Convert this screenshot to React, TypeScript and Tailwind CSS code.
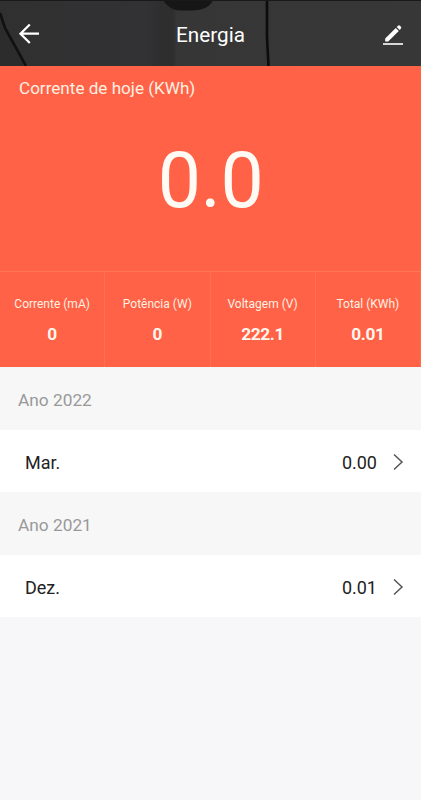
const stats = [
  { label: 'Corrente (mA)', value: '0' },
  { label: 'Potência (W)', value: '0' },
  { label: 'Voltagem (V)', value: '222.1' },
  { label: 'Total (KWh)', value: '0.01' },
];

const years = [
  { title: 'Ano 2022', month: 'Mar.', value: '0.00' },
  { title: 'Ano 2021', month: 'Dez.', value: '0.01' },
];

function Header() {
  return (
    <header className="relative h-[66px] overflow-hidden bg-[#363637]">
      <svg className="absolute inset-0" width="421" height="66" viewBox="0 0 421 66" fill="none">
        <defs>
          <linearGradient id="shade" x1="0" x2="421" y1="0" y2="0" gradientUnits="userSpaceOnUse">
            <stop offset="0" stopColor="#303031" />
            <stop offset="0.350" stopColor="#323234" />
            <stop offset="0.380" stopColor="#2e2e2f" />
            <stop offset="0.410" stopColor="#2e2e2f" />
            <stop offset="0.420" stopColor="#363637" />
            <stop offset="1" stopColor="#373738" />
          </linearGradient>
        </defs>
        <rect width="421" height="66" fill="url(#shade)" />
        <path d="M0 13L5 28L26 66H0Z" fill="#2c2c2d" />
        <path d="M163 0H213Q209 10 192 10.500H180Q169 10 163 0Z" fill="#161617" />
        <path d="M0 13L5 28L26 66" stroke="#111112" strokeWidth="2.600" />
        <path d="M267 0V37L268.500 66" stroke="#0c0c0d" strokeWidth="2.600" />
        <rect width="421" height="1" fill="#19191a" />
      </svg>
      <div className="relative grid h-full grid-cols-[1fr_auto_1fr] items-center pt-[3px] text-white">
        <svg className="mt-[-2px] ml-[18px]" width="22" height="22" viewBox="0 0 22 22" fill="none" stroke="currentColor" strokeWidth="2.300">
          <path d="M11.800 1.500L2.500 10.700L11.800 20M2.500 10.700H21" />
        </svg>
        <h1 className="text-[20.700px] leading-[24px]">Energia</h1>
        <svg className="mr-[17px] justify-self-end" width="22" height="22" viewBox="0 0 22 22">
          <path d="M3.200 17.400V14.600L13.800 4L16.800 7L6.200 17.400Z" fill="currentColor" />
          <path d="M14.700 3.100L16 1.800Q17 .9 18 1.800L18.900 2.700Q19.700 3.600 18.900 4.600L17.700 6Z" fill="currentColor" />
          <path d="M1 20H21" stroke="currentColor" strokeWidth="1.600" />
        </svg>
      </div>
    </header>
  );
}

export default function App() {
  return (
    <main className="flex h-[800px] w-[421px] flex-col overflow-hidden bg-[#f7f7f9] font-[Roboto,sans-serif]">
      <Header />
      <section className="h-[301px] bg-[#ff6246] text-[#fff0e2]">
        <div className="h-[205px] pt-[10px]">
          <h2 className="pl-[19px] text-[17.100px] leading-[24px]">Corrente de hoje (KWh)</h2>
          <p className="mt-[35px] text-center text-[77px] leading-[92px] tracking-[-0.500px] text-[#fffaf4]">0.0</p>
        </div>
        <div className="grid h-[96px] grid-cols-4 border-t border-[#ff7752]">
          {stats.map((s) => (
            <div key={s.label} className="flex flex-col items-center border-r border-[#ff7050] pt-[23px]">
              <span className="text-[12px] leading-[18px] whitespace-nowrap">{s.label}</span>
              <strong className="mt-[11px] text-[17.300px] leading-[20px] font-bold tracking-[-0.400px] text-[#fff7ee]">{s.value}</strong>
            </div>
          ))}
        </div>
      </section>
      {years.map((y) => (
        <section key={y.title}>
          <h3 className="h-[63px] bg-[#f7f7f8] pt-[21px] pl-[18px] text-[17.300px] leading-[24px] text-[#999]">{y.title}</h3>
          <div className="flex h-[62px] items-center bg-white pt-[3px] pr-[17px] pl-[25px] text-[18px] leading-[24px] text-[#222]">
            <span className="flex-1">{y.month}</span>
            <span>{y.value}</span>
            <svg className="mt-[-2px] ml-[15px]" width="12" height="18" viewBox="0 0 12 18" fill="none" stroke="#555" strokeWidth="1.500">
              <path d="M2 1.500L10 9L2 16.500" />
            </svg>
          </div>
        </section>
      ))}
    </main>
  );
}
